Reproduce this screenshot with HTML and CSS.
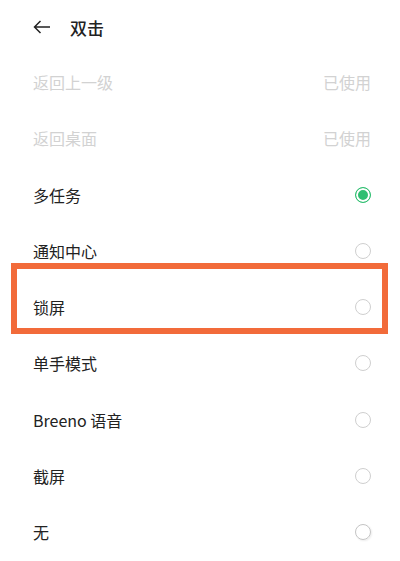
FILE: index.html
```html
<!DOCTYPE html>
<html lang="zh-CN">
<head>
    <meta charset="UTF-8">
    <meta name="viewport" content="width=device-width, initial-scale=1.0">
    <title>双击</title>
    <link rel="stylesheet" href="styles.css">
</head>
<body>

    <!-- Top bar -->
    <div class="header">
        <svg class="back" width="18" height="14" viewBox="0 0 18 14">
            <path d="M17 7H1.5M7.5 1L1.5 7L7.5 13" fill="none" stroke="#222" stroke-width="1.5"/>
        </svg>
        <div class="title">双击</div>
    </div>

    <div class="list">
        <div class="row disabled">
            <div class="label">返回上一级</div>
            <div class="state">已使用</div>
        </div>
        <div class="row disabled">
            <div class="label">返回桌面</div>
            <div class="state">已使用</div>
        </div>
        <div class="row">
            <div class="label">多任务</div>
            <div class="radio checked"></div>
        </div>
        <div class="row">
            <div class="label">通知中心</div>
            <div class="radio"></div>
        </div>
        <div class="row highlight">
            <div class="label">锁屏</div>
            <div class="radio"></div>
            <div class="mark"></div>
        </div>
        <div class="row">
            <div class="label">单手模式</div>
            <div class="radio"></div>
        </div>
        <div class="row">
            <div class="label">Breeno 语音</div>
            <div class="radio"></div>
        </div>
        <div class="row">
            <div class="label">截屏</div>
            <div class="radio"></div>
        </div>
        <div class="row">
            <div class="label">无</div>
            <div class="radio last"></div>
        </div>
    </div>

</body>
</html>
```

FILE: styles.css
```css
body {
    margin: 0;
    background-color: #ffffff;
    font-family: "Noto Sans CJK SC", "Noto Sans", sans-serif;
    color: #222222;
    overflow: hidden;
}
.header {
    display: flex;
    align-items: center;
    height: 54px;
    padding-left: 33px;
}
.back {
    margin-right: 19px;
}
.title {
    font-size: 17px;
    font-weight: 500;
}
.row {
    position: relative;
    display: flex;
    align-items: center;
    justify-content: space-between;
    height: 56.25px;
    padding: 0 29px 0 33px;
    font-size: 16px;
}
.disabled {
    color: #d2d2d2;
}
.radio {
    width: 14px;
    height: 14px;
    border: 1.5px solid #cfcfcf;
    border-radius: 50%;
}
.radio.checked {
    border-color: #2fbf71;
    background-color: #2fbf71;
    box-shadow: inset 0 0 0 2px #ffffff;
}
.radio.last {
    border-color: #c4c4c4;
    box-shadow: 1px 1px 2px rgba(0, 0, 0, 0.08);
}
.mark {
    position: absolute;
    top: -16px;
    bottom: 1px;
    left: 11px;
    right: 12px;
    border: 6px solid #f26b3a;
    pointer-events: none;
}
```
